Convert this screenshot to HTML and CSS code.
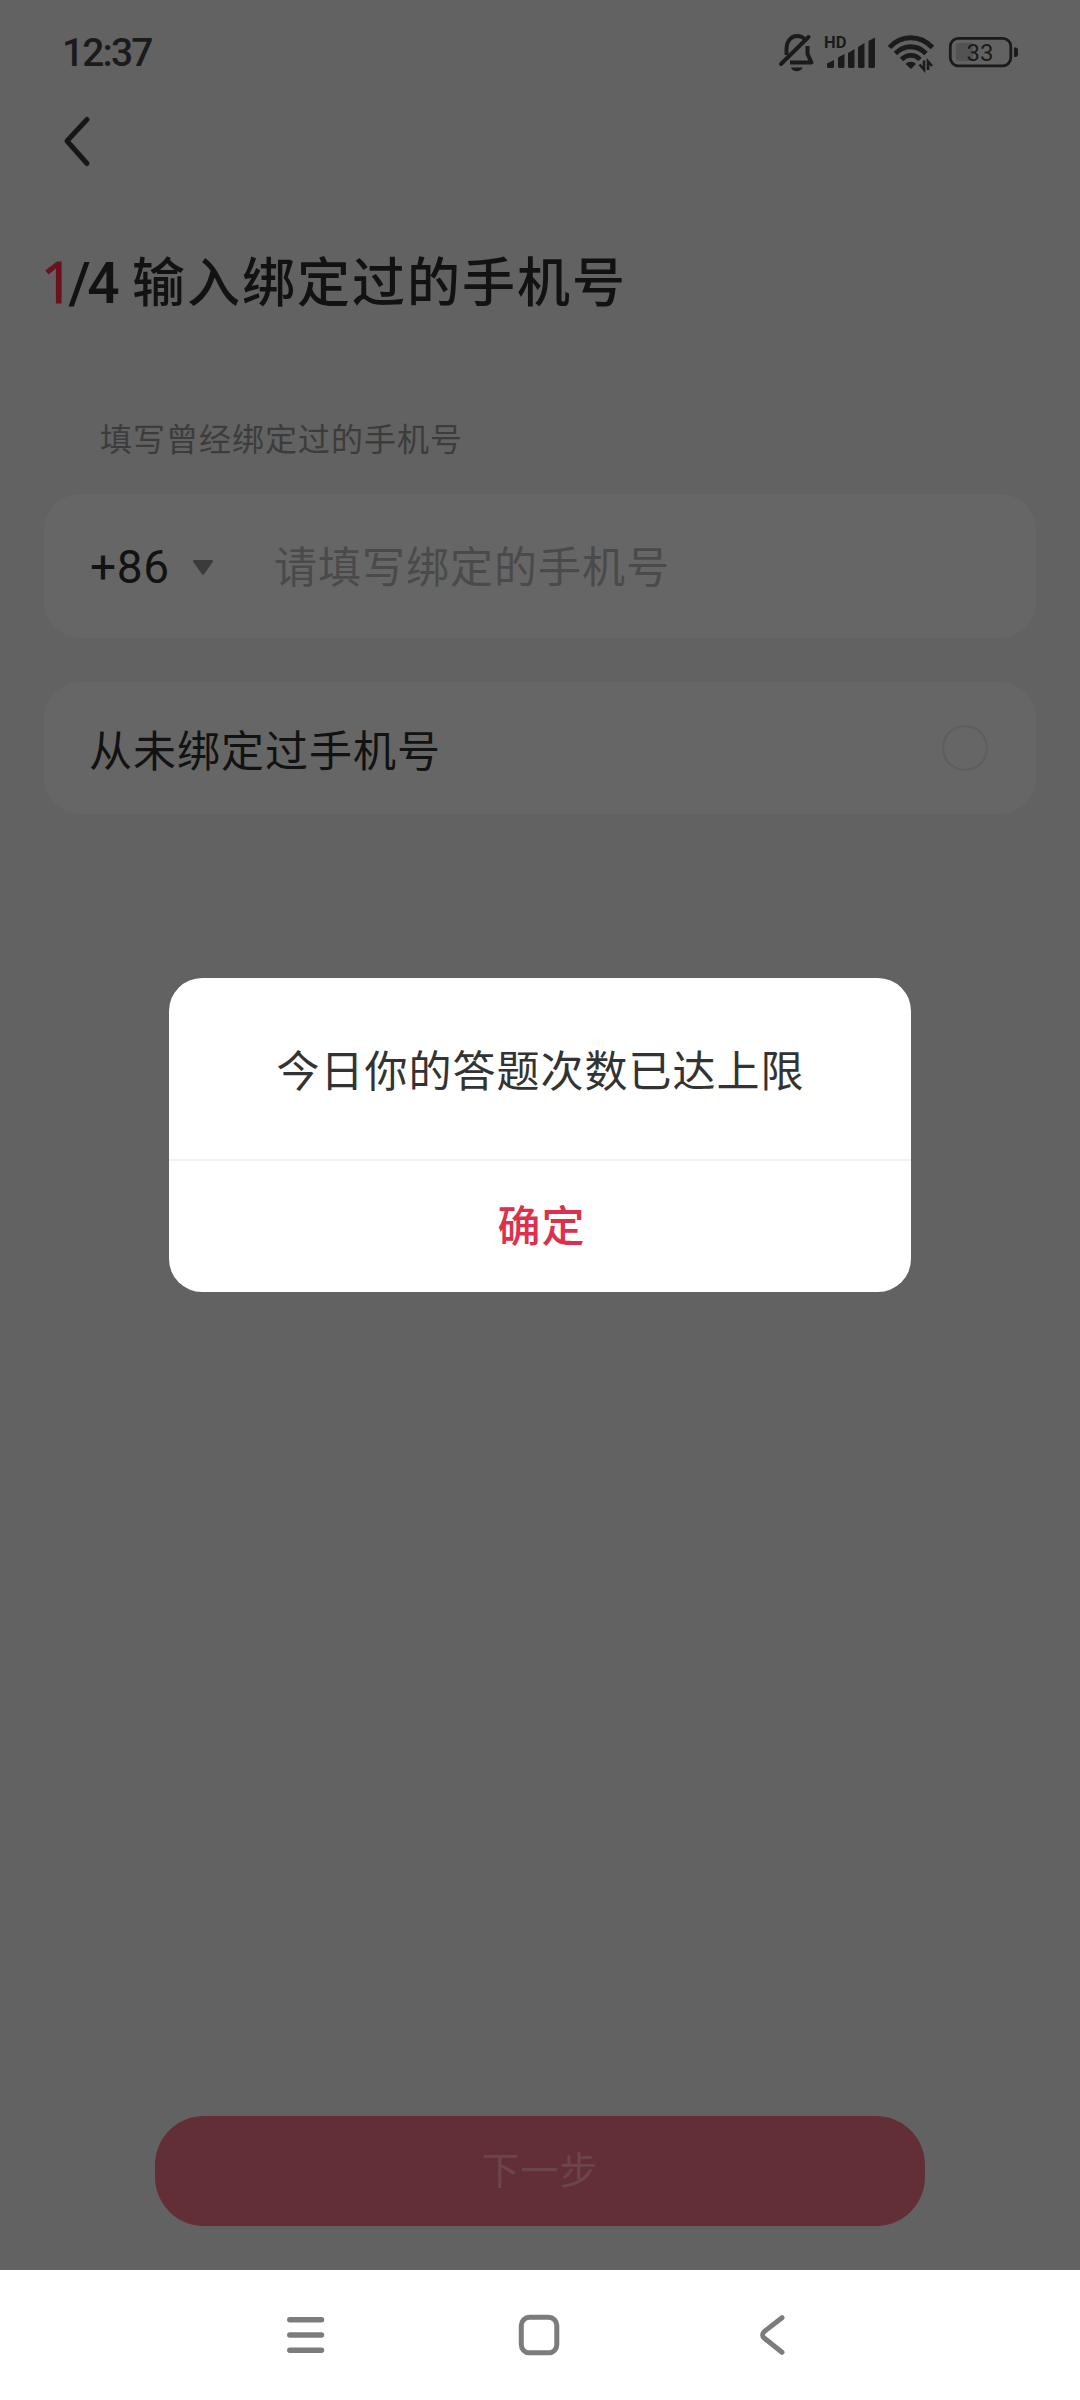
FILE: index.html
```html
<!DOCTYPE html>
<html lang="zh-CN">
<head>
<meta charset="utf-8">
<title>输入绑定过的手机号</title>
<link rel="stylesheet" href="styles.css">
</head>
<body>
<div class="screen">
  <main class="page">
    <header class="status">
      <span class="time">12:37</span>
      <svg class="status-icons" width="244" height="44" viewBox="776 30 244 44" fill="none" stroke="#1b1b1b">
        <!-- muted bell -->
        <path d="M786.500 55V50C786.500 41 791 36 797 36C800.500 36 803.500 37.500 805.500 40" stroke-width="4"/>
        <path d="M781 64L808.500 37" stroke-width="4" stroke-linecap="round"/>
        <path d="M807.500 46V54L811.500 62.500H790" stroke-width="4" stroke-linejoin="round"/>
        <path d="M791 67.500H802.500C801 72.500 792.500 72.500 791 67.500Z" fill="#1b1b1b" stroke="none"/>
        <!-- signal bars -->
        <g fill="#1b1b1b" stroke="none">
          <path d="M827 67V63.500L834 60V67L833 68H828ZM838 67V57.500L844.500 54V67L843.500 68H839ZM848 67V53L854.500 49V67L853.500 68H849ZM858 67V47L864.500 43V67L863.500 68H859ZM868.500 67V41L875 37.500V67L874 68H869.500Z"/>
        </g>
        <!-- wifi -->
        <g stroke-width="4.800">
          <path d="M889.500 47.500C901 34.500 920 34.500 932.500 47.500" />
          <path d="M895.500 53.500C904 44.500 917 44.500 926 53.500" />
          <path d="M901.500 59.500C907 54 915 54 920 59.500" />
        </g>
        <path d="M905.500 64C908 61 913.500 61 916 64L911 69Z" fill="#1b1b1b" stroke="none"/>
        <path d="M924 60.500V69.500L919.500 64.500M928 70V61.500L932 66" stroke-width="2.600"/>
        <!-- battery -->
        <rect x="956" y="43" width="17" height="18" rx="2" fill="#535353" stroke="none"/>
        <rect x="950.300" y="38.300" width="60.500" height="27.500" rx="8" stroke-width="2.800"/>
        <path d="M1014 47.500H1015.500Q1018 47.500 1018 50V54.500Q1018 57 1015.500 57H1014Z" fill="#1b1b1b" stroke="none"/>
        <text class="hd" x="824" y="48">HD</text>
        <text class="charge" x="980" y="61">33</text>
      </svg>
    </header>
    <nav class="topbar">
      <svg width="30" height="54" viewBox="0 0 30 54" fill="none" stroke="#161616" stroke-width="5" stroke-linecap="round" stroke-linejoin="round"><path d="M25 5.500L5 27L25 49.500"/></svg>
    </nav>
    <h1 class="title"><span class="step"><b>1</b>/4</span><span>输入绑定过的手机号</span></h1>
    <p class="hint">填写曾经绑定过的手机号</p>
    <section class="card phone">
      <span class="code">+86</span>
      <svg width="22" height="17" viewBox="0 0 22 17" fill="#3b3b3b"><path d="M2.500 1H19.500Q22 1 20.500 3.200L12.200 15Q11 16.500 9.800 15L1.500 3.200Q0 1 2.500 1Z"/></svg>
      <span class="placeholder">请填写绑定的手机号</span>
    </section>
    <section class="card never">
      <span class="never-text">从未绑定过手机号</span>
      <span class="radio"></span>
    </section>
    <div class="next">下一步</div>
    <div class="dialog">
      <p class="message">今日你的答题次数已达上限</p>
      <p class="confirm">确定</p>
    </div>
  </main>
  <footer class="navbar">
    <svg width="40" height="42" viewBox="0 0 40 42" stroke="#7c7c7c" stroke-width="5.500" stroke-linecap="round"><path d="M3.800 5.700H35.500M3.800 21H35.500M3.800 36.300H35.500"/></svg>
    <svg class="home" width="42" height="42" viewBox="0 0 42 42" fill="none" stroke="#7c7c7c" stroke-width="5"><rect x="3.300" y="3.300" width="35.500" height="35.500" rx="8"/></svg>
    <svg width="27" height="42" viewBox="0 0 27 42" fill="none" stroke="#7c7c7c" stroke-width="5" stroke-linecap="round"><path d="M23 3.700L5.500 17.300Q1.700 21 5.500 24.300L23 38.300"/></svg>
  </footer>
</div>
</body>
</html>
```
FILE: styles.css
```css
* { box-sizing: border-box; }
body, h1, p { margin: 0; font-weight: 400; }
body { font-family: Roboto, "Noto Sans CJK SC", sans-serif; color: #121212; }
svg { display: block; flex: none; }
.screen { width: 1080px; height: 2400px; display: flex; flex-direction: column; background: #fff; }
.page { position: relative; height: 2270px; display: flex; flex-direction: column; background: #626262; white-space: nowrap; }
.status { height: 104px; padding: 30px 60px 0 62px; display: flex; justify-content: space-between; }
.time { font-size: 39px; font-weight: 500; line-height: 46px; letter-spacing: -1.9px; color: #1b1b1b; }
.hd { font: 700 16.500px Roboto, sans-serif; fill: #1b1b1b; stroke: none; }
.charge { font: 400 24px Roboto, sans-serif; fill: #1b1b1b; stroke: none; text-anchor: middle; }
.topbar { height: 120px; padding: 10px 0 0 62px; }
.title { height: 117px; padding-left: 41px; display: flex; font-size: 53px; line-height: 121px; letter-spacing: 2px; font-weight: 500; }
.step { width: 91px; font-size: 57px; line-height: 119px; letter-spacing: -3.500px; }
.step b { color: #6b1220; font-family: "Open Sans", sans-serif; font-weight: 500; line-height: 1; letter-spacing: -5px; -webkit-text-stroke: 1.200px #6b1220; }
.hint { height: 153px; padding: 77px 0 0 100px; font-size: 32px; line-height: 45px; letter-spacing: 1px; color: #3c3c3c; }
.card { margin: 0 44px; border-radius: 36px; background: #666; display: flex; align-items: center; flex: none; }
.phone { height: 144px; padding-left: 46px; font-size: 46px; }
.phone svg { margin-top: 3px; }
.code { width: 102px; padding-top: 2px; letter-spacing: .6px; }
.placeholder { margin: -5px 0 0 60px; font-size: 43px; letter-spacing: 1px; color: #4a4a4a; }
.never { height: 132px; margin-top: 44px; padding: 0 48px 0 45px; justify-content: space-between; font-size: 43px; letter-spacing: 1px; }
.radio { width: 46px; height: 46px; border: 2px solid #5e5e5e; border-radius: 50%; }
.next { width: 770px; height: 110px; margin: auto auto 44px; border-radius: 49px; background: #622f37; color: #6c454b; font-size: 38px; letter-spacing: 1px; line-height: 111px; text-align: center; }
.dialog { position: absolute; left: 169px; top: 978px; width: 742px; height: 314px; border-radius: 33px; background: #fff; text-align: center; font-size: 43px; letter-spacing: 1px; }
.message { height: 183px; padding-left: 1px; border-bottom: 2px solid #f2f2f2; line-height: 188px; color: #333; }
.confirm { padding-left: 3px; line-height: 132px; color: #dd304c; font-weight: 500; }
.navbar { height: 130px; padding: 44px 294px 0 286px; display: flex; justify-content: space-between; }
.home { margin-right: 8px; }
```
